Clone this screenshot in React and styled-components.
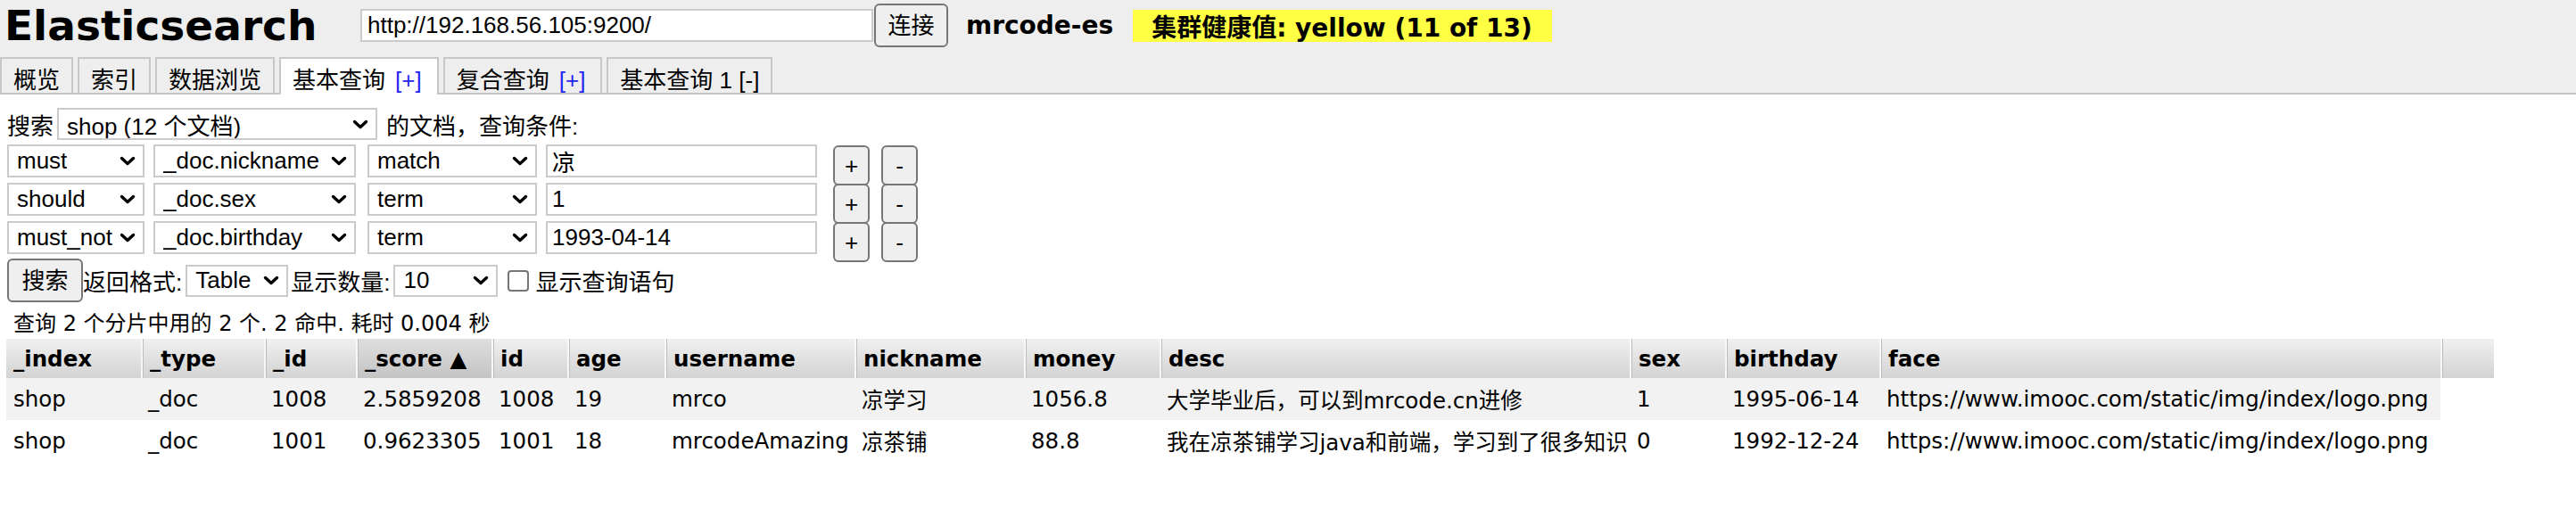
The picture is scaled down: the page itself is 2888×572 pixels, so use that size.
import React from "react";
import styled, { createGlobalStyle } from "styled-components";

const GlobalStyle = createGlobalStyle`
  body {
    margin: 0;
    background: #fff;
    color: #000;
    font-family: "Liberation Sans", "Noto Sans CJK SC", sans-serif;
    font-size: 26px;
  }
`;

const CJK_SANS = `"Liberation Sans", "Noto Sans CJK SC", sans-serif`;
const TABLE_FONT = `"DejaVu Sans", "Noto Sans CJK SC", sans-serif`;

const COLUMNS = [
  { key: "_index", width: 151 },
  { key: "_type", width: 138 },
  { key: "_id", width: 103 },
  { key: "_score", width: 152, sorted: true },
  { key: "id", width: 85 },
  { key: "age", width: 109 },
  { key: "username", width: 213 },
  { key: "nickname", width: 190 },
  { key: "money", width: 152 },
  { key: "desc", width: 527 },
  { key: "sex", width: 107 },
  { key: "birthday", width: 173 },
  { key: "face", width: 629 },
];

const HITS = [
  [
    "shop",
    "_doc",
    "1008",
    "2.5859208",
    "1008",
    "19",
    "mrco",
    "凉学习",
    "1056.8",
    "大学毕业后，可以到mrcode.cn进修",
    "1",
    "1995-06-14",
    "https://www.imooc.com/static/img/index/logo.png",
  ],
  [
    "shop",
    "_doc",
    "1001",
    "0.9623305",
    "1001",
    "18",
    "mrcodeAmazing",
    "凉茶铺",
    "88.8",
    "我在凉茶铺学习java和前端，学习到了很多知识",
    "0",
    "1992-12-24",
    "https://www.imooc.com/static/img/index/logo.png",
  ],
];

const CLAUSES = [
  { bool: "must", field: "_doc.nickname", op: "match", value: "凉" },
  { bool: "should", field: "_doc.sex", op: "term", value: "1" },
  { bool: "must_not", field: "_doc.birthday", op: "term", value: "1993-04-14" },
];

const TABS = [
  { label: "概览" },
  { label: "索引" },
  { label: "数据浏览" },
  { label: "基本查询", action: "[+]", active: true },
  { label: "复合查询", action: "[+]" },
  { label: "基本查询 1 [-]" },
];

function Chevron() {
  return (
    <ChevronIcon width="18" height="11" viewBox="0 0 18 11">
      <polyline
        points="2.5,2.5 9,8.5 15.5,2.5"
        fill="none"
        stroke="#000"
        strokeWidth="3.4"
        strokeLinecap="round"
        strokeLinejoin="round"
      />
    </ChevronIcon>
  );
}

function Dropdown({ width, height = 36, children, ...delegated }) {
  return (
    <SelectBox $width={width} $height={height} {...delegated}>
      <SelectText>{children}</SelectText>
      <Chevron />
    </SelectBox>
  );
}

function App() {
  return (
    <>
      <GlobalStyle />
      <Header>
        <TopBar>
          <Title>Elasticsearch</Title>
          <UrlInput type="text" defaultValue="http://192.168.56.105:9200/" />
          <PushButton $width={83} $height={49}>
            连接
          </PushButton>
          <ClusterName>mrcode-es</ClusterName>
          <Health>集群健康值: yellow (11 of 13)</Health>
        </TopBar>
        <TabList>
          {TABS.map((tab) => (
            <Tab key={tab.label + (tab.action || "")} $active={tab.active}>
              {tab.label}
              {tab.action && <TabAction>{tab.action}</TabAction>}
            </Tab>
          ))}
        </TabList>
      </Header>

      <Content>
        <SearchLine>
          <span>搜索</span>
          <Dropdown width={359} style={{ margin: "0 10px 0 4px" }}>
            shop (12 个文档)
          </Dropdown>
          <span>的文档，查询条件:</span>
        </SearchLine>

        <Clauses>
          {CLAUSES.map((clause) => (
            <ClauseRow key={clause.bool}>
              <Dropdown width={154} height={37}>
                {clause.bool}
              </Dropdown>
              <Dropdown width={227} height={37}>
                {clause.field}
              </Dropdown>
              <Dropdown width={190} height={37}>
                {clause.op}
              </Dropdown>
              <ValueInput type="text" defaultValue={clause.value} />
              <PushButton $width={41} $height={45}>
                +
              </PushButton>
              <PushButton $width={41} $height={45}>
                -
              </PushButton>
            </ClauseRow>
          ))}
        </Clauses>

        <Controls>
          <PushButton $width={85} $height={49}>
            搜索
          </PushButton>
          <Label>返回格式:</Label>
          <Dropdown width={115} style={{ margin: "0 3px 0 4px" }}>
            Table
          </Dropdown>
          <Label>显示数量:</Label>
          <Dropdown width={117} style={{ margin: "0 0 0 4px" }}>
            10
          </Dropdown>
          <Checkbox type="checkbox" />
          <Label>显示查询语句</Label>
        </Controls>

        <Summary>查询 2 个分片中用的 2 个. 2 命中. 耗时 0.004 秒</Summary>

        <ResultTable>
          <colgroup>
            {COLUMNS.map((col) => (
              <col key={col.key} style={{ width: col.width }} />
            ))}
            <col style={{ width: 60 }} />
          </colgroup>
          <thead>
            <tr>
              {COLUMNS.map((col) => (
                <HeadCell key={col.key} $sorted={col.sorted}>
                  {col.key}
                  {col.sorted && " ▲"}
                </HeadCell>
              ))}
              <HeadCell />
            </tr>
          </thead>
          <tbody>
            {HITS.map((hit, i) => (
              <Row key={hit[2]} $striped={i % 2 === 0}>
                {hit.map((value, j) => (
                  <Cell key={COLUMNS[j].key}>{value}</Cell>
                ))}
                <FillerCell />
              </Row>
            ))}
          </tbody>
        </ResultTable>
      </Content>
    </>
  );
}

const Header = styled.header`
  background: #eee;
  border-bottom: 2px solid #c4c4c4;
  padding-top: 4px;
`;
const TopBar = styled.div`
  display: flex;
  align-items: center;
  height: 49px;
  padding-left: 5px;
`;
const Title = styled.h1`
  flex: 0 0 399px;
  margin: 0;
  font-family: "DejaVu Sans", sans-serif;
  font-weight: 700;
  font-size: 47px;
  line-height: 49px;
`;
const UrlInput = styled.input`
  box-sizing: border-box;
  width: 575px;
  height: 37px;
  margin: 0 1px 0 0;
  padding: 0 6px;
  border: 2px solid #cbcbcb;
  background: #fff;
  font-family: ${CJK_SANS};
  font-size: 26px;
  color: #000;
  outline: none;
`;
const PushButton = styled.button`
  box-sizing: border-box;
  flex: 0 0 auto;
  width: ${(p) => p.$width}px;
  height: ${(p) => p.$height}px;
  margin: 0;
  padding: 0;
  border: 2px solid #767676;
  border-radius: 6px;
  background: #efefef;
  color: #000;
  font-family: ${CJK_SANS};
  font-size: 26px;
  line-height: 1;
`;
const ClusterName = styled.span`
  margin-left: 20px;
  font-family: "DejaVu Sans", sans-serif;
  font-weight: 700;
  font-size: 28px;
`;
const Health = styled.span`
  margin-left: 22px;
  height: 36px;
  padding: 0 22px 0 21px;
  display: flex;
  align-items: center;
  background: #ffff44;
  font-family: "DejaVu Sans", "Noto Sans CJK SC", sans-serif;
  font-weight: 700;
  font-size: 28px;
  white-space: nowrap;
`;
const TabList = styled.nav`
  display: flex;
  align-items: flex-start;
  gap: 5px;
  margin-top: 11px;
  margin-bottom: -2px;
`;
const Tab = styled.div`
  position: relative;
  z-index: ${(p) => (p.$active ? 1 : 0)};
  box-sizing: border-box;
  height: ${(p) => (p.$active ? 42 : 40)}px;
  padding: 10px 13px 0;
  border: 2px solid #c8c8c8;
  border-bottom: none;
  background: ${(p) => (p.$active ? "#fff" : "#eee")};
  font-family: ${CJK_SANS};
  font-size: 26px;
  line-height: 28px;
  white-space: nowrap;
`;
const TabAction = styled.span`
  padding: 0 4px 0 11px;
  color: #2424f0;
`;
const Content = styled.main`
  padding: 0 8px;
`;
const SearchLine = styled.div`
  display: flex;
  align-items: center;
  margin-top: 15px;
  height: 36px;
  font-family: ${CJK_SANS};
  font-size: 26px;
`;
const SelectBox = styled.div`
  box-sizing: border-box;
  flex: 0 0 auto;
  display: flex;
  align-items: center;
  justify-content: space-between;
  gap: 2px;
  width: ${(p) => p.$width}px;
  height: ${(p) => p.$height}px;
  padding: 0 8px 0 9px;
  border: 2px solid #cbcbcb;
  background: #fff;
  font-family: ${CJK_SANS};
  font-size: 26px;
  overflow: hidden;
`;
const SelectText = styled.span`
  white-space: nowrap;
  overflow: hidden;
`;
const ChevronIcon = styled.svg`
  flex: 0 0 auto;
  display: block;
`;
const Clauses = styled.div`
  margin-top: 5px;
`;
const ClauseRow = styled.div`
  display: flex;
  align-items: flex-start;
  height: 43px;
  gap: 10px;

  & > *:nth-child(3) {
    margin-left: 3px;
  }
  & > button {
    margin-top: 1px;
  }
`;
const ValueInput = styled.input`
  box-sizing: border-box;
  width: 304px;
  height: 37px;
  margin: 0;
  padding: 0 5px;
  border: 2px solid #cbcbcb;
  background: #fff;
  font-family: ${CJK_SANS};
  font-size: 26px;
  color: #000;
  outline: none;
  & + button {
    margin-left: 8px;
  }
  & + button + button {
    margin-left: 3px;
  }
`;
const Controls = styled.div`
  display: flex;
  align-items: center;
  margin-top: -1px;
  height: 49px;
`;
const Label = styled.span`
  font-family: ${CJK_SANS};
  font-size: 26px;
  white-space: nowrap;
`;
const Checkbox = styled.input`
  appearance: none;
  box-sizing: border-box;
  width: 24px;
  height: 24px;
  margin: 0 7px 0 11px;
  border: 2px solid #767676;
  border-radius: 4px;
  background: #fff;
`;
const Summary = styled.p`
  margin: 10px 0 3px;
  padding-left: 7px;
  font-family: ${TABLE_FONT};
  font-size: 24px;
  line-height: 28px;
  white-space: nowrap;
`;
const ResultTable = styled.table`
  margin-left: -1px;
  table-layout: fixed;
  width: 2789px;
  border-collapse: separate;
  border-spacing: 0;
  font-family: ${TABLE_FONT};
  font-size: 24.5px;
`;
const HeadCell = styled.th`
  box-sizing: border-box;
  height: 44px;
  padding: 0 8px;
  text-align: left;
  font-weight: 700;
  white-space: nowrap;
  background: ${(p) =>
    p.$sorted
      ? "linear-gradient(#dedede, #c4c4c4)"
      : "linear-gradient(#f0f0f0, #d3d3d3)"};
  border-left: 2px solid #f7f7f7;
  box-shadow: inset 1px 0 0 #bdbdbd;

  &:first-child {
    border-left: none;
    box-shadow: none;
  }
`;
const Row = styled.tr`
  background: ${(p) => (p.$striped ? "#f2f2f2" : "#fff")};
`;
const Cell = styled.td`
  height: 47px;
  padding: 0 8px;
  white-space: nowrap;
  overflow: hidden;
`;
const FillerCell = styled.td`
  background: #fff;
`;

export default App;
